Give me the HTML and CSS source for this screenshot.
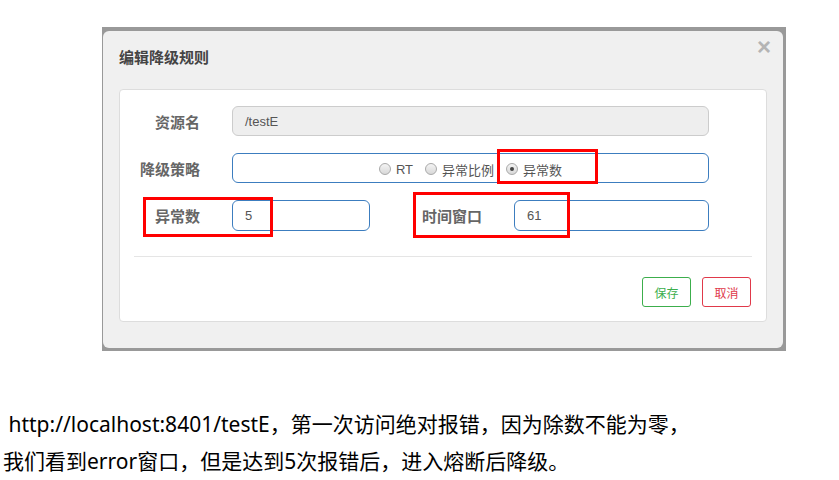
FILE: index.html
```html
<!DOCTYPE html>
<html lang="zh-CN">
<head>
  <meta charset="UTF-8">
  <title>编辑降级规则</title>
  <link rel="stylesheet" href="styles.css">
</head>
<body>
  <div class="shot">
    <div class="dialog">
      <div class="dialog-header">
        <h3 class="dialog-title">编辑降级规则</h3>
        <span class="close">&times;</span>
      </div>
      <div class="panel">
        <div class="form-row">
          <label class="label">资源名</label>
          <div class="field field-wide disabled">/testE</div>
        </div>
        <div class="form-row">
          <label class="label">降级策略</label>
          <div class="field field-wide radios">
            <label class="radio"><input type="radio" name="grade"> RT</label>
            <label class="radio"><input type="radio" name="grade"> 异常比例</label>
            <label class="radio"><input type="radio" name="grade" checked> 异常数</label>
          </div>
        </div>
        <div class="form-row">
          <label class="label">异常数</label>
          <div class="field field-short">5</div>
          <label class="label label-second">时间窗口</label>
          <div class="field field-mid">61</div>
        </div>
        <div class="divider"></div>
        <div class="actions">
          <button class="btn btn-save">保存</button>
          <button class="btn btn-cancel">取消</button>
        </div>
      </div>
    </div>
    <div class="mark mark-strategy"></div>
    <div class="mark mark-count"></div>
    <div class="mark mark-window"></div>
  </div>

  <div class="note">
    <p>&nbsp;http://localhost:8401/testE，第一次访问绝对报错，因为除数不能为零，</p>
    <p>我们看到error窗口，但是达到5次报错后，进入熔断后降级。</p>
  </div>
</body>
</html>
```

FILE: styles.css
```css
html,body{
  margin: 0;
  background: #ffffff;
}
.shot{
  position: relative;
  margin: 27px 0 0 102px;
  width: 684px;
  height: 324px;
  box-sizing: border-box;
  padding: 4px 3px 3px 1px;
  background: #999999;
  font-family: "Liberation Sans", "Noto Sans CJK SC", sans-serif;
}
.dialog{
  position: relative;
  height: 317px;
  box-sizing: border-box;
  background: #f0f0f0;
  border-radius: 6px;
  padding: 0 16px;
}
.dialog-header{
  padding: 16px 0 20px 0;
}
.dialog-title{
  margin: 0;
  font-size: 15px;
  line-height: 22px;
  font-weight: bold;
  color: #444444;
}
.close{
  position: absolute;
  top: 4px;
  right: 12px;
  font-size: 24px;
  font-weight: bold;
  color: #b4b4b4;
  line-height: 24px;
}
.panel{
  background: #ffffff;
  border: 1px solid #dddddd;
  border-radius: 4px;
  height: 233px;
  box-sizing: border-box;
  padding-top: 16px;
}
.form-row{
  display: flex;
  align-items: center;
  height: 30px;
  margin-bottom: 17px;
}
.form-row:nth-child(3){
  margin-bottom: 0;
  height: 31px;
}
.label{
  width: 80px;
  margin-right: 32px;
  text-align: right;
  font-size: 15px;
  font-weight: bold;
  color: #666666;
}
.label-second{
  margin-left: 32px;
}
.field{
  height: 100%;
  box-sizing: border-box;
  border: 1px solid #3c7dbf;
  border-radius: 6px;
  padding-left: 12px;
  display: flex;
  align-items: center;
  font-size: 13px;
  color: #555555;
}
.field-wide{
  width: 477px;
}
.field-short{
  width: 138px;
}
.field-mid{
  width: 195px;
}
.disabled{
  background: #eeeeee;
  border-color: #cccccc;
}
.radios{
  justify-content: center;
  padding: 2px 0 0 0;
  gap: 12px;
}
.radio{
  display: flex;
  align-items: center;
  gap: 5px;
  font-size: 13px;
  color: #555555;
}
.radio input{
  appearance: none;
  -webkit-appearance: none;
  margin: 0;
  width: 12px;
  height: 12px;
  border: 1px solid #a9a9a9;
  border-radius: 50%;
  background: linear-gradient(#f4f4f4, #d8d8d8);
  box-sizing: border-box;
  position: relative;
}
.radio input:checked::after{
  content: "";
  position: absolute;
  left: 3px;
  top: 3px;
  width: 4px;
  height: 4px;
  border-radius: 50%;
  background: #444444;
}
.divider{
  margin: 25px 14px 0 14px;
  border-top: 1px solid #e5e5e5;
}
.actions{
  display: flex;
  justify-content: flex-end;
  gap: 11px;
  margin: 20px 15px 0 0;
}
.btn{
  width: 49px;
  height: 30px;
  background: #ffffff;
  border-radius: 3px;
  font-family: "Liberation Sans", "Noto Sans CJK SC", sans-serif;
  font-size: 12px;
  padding: 0;
}
.btn-save{
  border: 1px solid #3cae4c;
  color: #3cae4c;
}
.btn-cancel{
  border: 1px solid #e0394a;
  color: #e0394a;
}
.mark{
  position: absolute;
  border: 3px solid #ff0000;
  box-sizing: border-box;
}
.mark-strategy{
  left: 395px;
  top: 122px;
  width: 101px;
  height: 35px;
}
.mark-count{
  left: 41px;
  top: 170px;
  width: 130px;
  height: 40px;
}
.mark-window{
  left: 311px;
  top: 165px;
  width: 157px;
  height: 46px;
}
.note{
  margin: 55px 0 0 3px;
  font-family: "Noto Sans", "Noto Sans CJK SC", sans-serif;
  font-size: 21px;
  color: #000000;
}
.note p{
  margin: 0;
  line-height: 37px;
}
```
